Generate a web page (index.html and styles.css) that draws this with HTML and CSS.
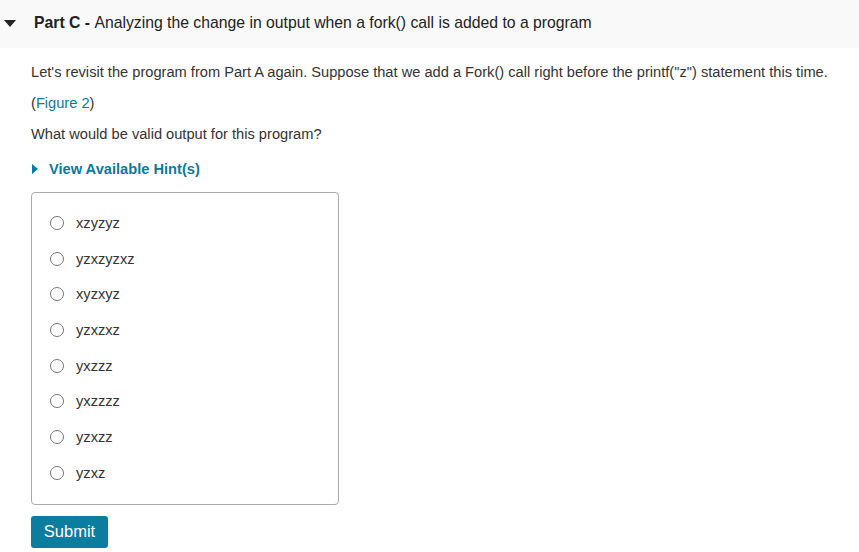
FILE: index.html
```html
<!DOCTYPE html>
<html lang="en">
<head>
    <meta charset="UTF-8">
    <title>Part C</title>
    <link rel="stylesheet" href="styles.css">
</head>
<body>
    <div class="part-header">
        <span class="caret-down"></span>
        <span class="part-title"><b>Part C - </b>Analyzing the change in output when a fork() call is added to a program</span>
    </div>
    <div class="part-body">
        <p>Let's revisit the program from Part A again. Suppose that we add a Fork() call right before the printf("z") statement this time.</p>
        <p>(<a href="#" class="link">Figure 2</a>)</p>
        <p>What would be valid output for this program?</p>
        <div class="hint"><span class="caret-right"></span>View Available Hint(s)</div>

        <div class="choices">
            <label class="choice"><input type="radio" name="ans"><span>xzyzyz</span></label>
            <label class="choice"><input type="radio" name="ans"><span>yzxzyzxz</span></label>
            <label class="choice"><input type="radio" name="ans"><span>xyzxyz</span></label>
            <label class="choice"><input type="radio" name="ans"><span>yzxzxz</span></label>
            <label class="choice"><input type="radio" name="ans"><span>yxzzz</span></label>
            <label class="choice"><input type="radio" name="ans"><span>yxzzzz</span></label>
            <label class="choice"><input type="radio" name="ans"><span>yzxzz</span></label>
            <label class="choice"><input type="radio" name="ans"><span>yzxz</span></label>
        </div>

        <button class="submit">Submit</button>
    </div>
</body>
</html>
```

FILE: styles.css
```css
body {
    margin: 0;
    background: #fff;
    font-family: "Liberation Sans", Arial, sans-serif;
    color: #333;
}
.part-header {
    background: #f9f9f9;
    height: 48px;
    display: flex;
    align-items: center;
    padding-left: 4px;
    box-sizing: border-box;
    padding-bottom: 2px;
}
.caret-down {
    width: 0;
    height: 0;
    border-left: 6px solid transparent;
    border-right: 6px solid transparent;
    border-top: 7px solid #222;
    margin-right: 18px;
}
.part-title {
    font-size: 15.75px;
    color: #222;
}
.part-body {
    padding: 9px 31px 0;
}
.part-body p {
    font-size: 14.65px;
    margin: 0;
    line-height: 31px;
}
.link {
    color: #0a7aa0;
    text-decoration: none;
}
.hint {
    display: flex;
    align-items: center;
    font-size: 14.65px;
    font-weight: bold;
    color: #0a7aa0;
    margin-top: 4px;
    height: 30px;
}
.caret-right {
    width: 0;
    height: 0;
    border-top: 5px solid transparent;
    border-bottom: 5px solid transparent;
    border-left: 6px solid #0a7aa0;
    margin: 0 11px 0 1px;
}
.choices {
    margin-top: 8px;
    width: 308px;
    box-sizing: border-box;
    border: 1px solid #aaa;
    border-radius: 4px;
    padding: 12px 0 13px 18px;
}
.choice {
    display: flex;
    align-items: center;
    height: 35.7px;
    font-size: 14.65px;
    color: #333;
}
.choice input {
    margin: 0 12px 0 0;
    width: 14px;
    height: 14px;
}
.submit {
    margin-top: 11px;
    background: #0b7d9e;
    color: #fff;
    border: none;
    border-radius: 3px;
    font-family: "Liberation Sans", Arial, sans-serif;
    font-size: 16.5px;
    width: 77px;
    height: 32px;
    padding: 0;
}
```
